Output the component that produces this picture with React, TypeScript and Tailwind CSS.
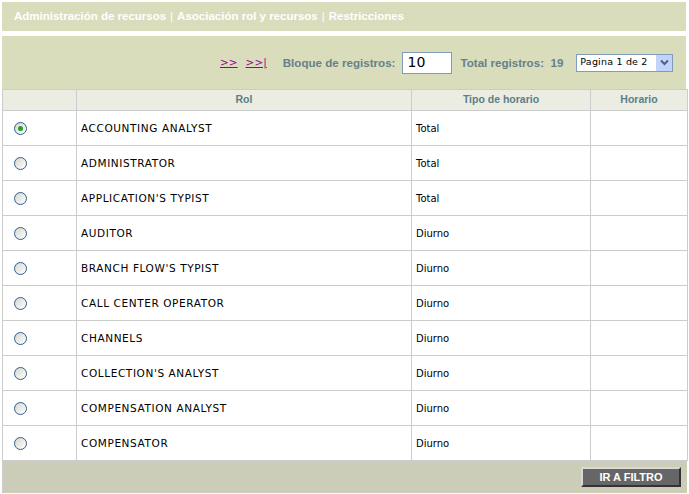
type Row = {
  rol: string;
  tipo: string;
  horario: string;
};

const rows: Row[] = [
  { rol: "ACCOUNTING ANALYST", tipo: "Total", horario: "" },
  { rol: "ADMINISTRATOR", tipo: "Total", horario: "" },
  { rol: "APPLICATION'S TYPIST", tipo: "Total", horario: "" },
  { rol: "AUDITOR", tipo: "Diurno", horario: "" },
  { rol: "BRANCH FLOW'S TYPIST", tipo: "Diurno", horario: "" },
  { rol: "CALL CENTER OPERATOR", tipo: "Diurno", horario: "" },
  { rol: "CHANNELS", tipo: "Diurno", horario: "" },
  { rol: "COLLECTION'S ANALYST", tipo: "Diurno", horario: "" },
  { rol: "COMPENSATION ANALYST", tipo: "Diurno", horario: "" },
  { rol: "COMPENSATOR", tipo: "Diurno", horario: "" },
];

function Radio({ checked }: { checked?: boolean }) {
  return (
    <span className="inline-flex h-[13px] w-[13px] items-center justify-center rounded-full border border-[#2f5f92] bg-gradient-to-br from-[#d6d6d0] to-white">
      {checked && <span className="h-[5px] w-[5px] rounded-full bg-[#21a121]" />}
    </span>
  );
}

export default function App() {
  return (
    <div className="relative h-[494px] w-[689px] overflow-hidden bg-white font-['DejaVu_Sans',Verdana,sans-serif]">
      <div className="pl-[2px] pr-[3px] pt-[2px]">
        {/* top menu */}
        <div className="flex h-[29px] items-center whitespace-nowrap bg-[#d9ddbc] pl-[12px] font-['Liberation_Sans',Arial,sans-serif] text-[11.5px] font-bold text-white">
          <span>Administración de recursos</span>
          <span className="mx-[4px] font-normal">|</span>
          <span>Asociación rol y recursos</span>
          <span className="mx-[4px] font-normal">|</span>
          <span>Restricciones</span>
        </div>

        {/* pager */}
        <div className="mt-[5px] flex h-[53px] items-center whitespace-nowrap bg-[#d9ddbc] pl-[218px] font-['Liberation_Sans',Arial,sans-serif] text-[11.6px]">
          <a className="shrink-0 font-['DejaVu_Sans',sans-serif] text-[10.5px] text-[#990099] underline">&gt;&gt;</a>
          <a className="ml-[8px] shrink-0 font-['DejaVu_Sans',sans-serif] text-[10.5px] text-[#990099] underline">&gt;&gt;|</a>
          <span className="ml-[16px] shrink-0 font-bold text-[#66808a]">Bloque de registros:</span>
          <span className="ml-[7px] flex h-[22px] w-[50px] shrink-0 items-center border border-[#7f9db9] bg-white pl-[4px] font-['DejaVu_Sans',sans-serif] text-[14px] text-black">
            10
          </span>
          <span className="ml-[8px] shrink-0 font-bold text-[#66808a]">Total registros:&nbsp; 19</span>
          <span className="ml-[13px] flex h-[18px] w-[97px] shrink-0 items-center justify-between border border-[#7f9db9] bg-white pl-[3px] font-['DejaVu_Sans',sans-serif] text-[9.5px] tracking-[0.2px] text-black">
            Pagina 1 de 2
            <span className="flex h-[16px] w-[16px] items-center justify-center bg-[#c1d3fb]">
              <svg width="9" height="7" viewBox="0 0 9 7">
                <path d="M1 1.5 L4.5 5 L8 1.5" stroke="#4d6185" strokeWidth="2" fill="none" />
              </svg>
            </span>
          </span>
        </div>

        {/* table */}
        <table className="w-[685px] table-fixed border-collapse text-[10.5px]">
          <colgroup>
            <col className="w-[74px]" />
            <col className="w-[335px]" />
            <col className="w-[179px]" />
            <col className="w-[97px]" />
          </colgroup>
          <thead>
            <tr className="h-[21px] bg-[#ebede3] font-['Liberation_Sans',Arial,sans-serif] text-[10.5px] font-bold text-[#5c7e84]">
              <th className="border border-[#cccccc]" />
              <th className="border border-[#cccccc] text-center">Rol</th>
              <th className="border border-[#cccccc] text-center">Tipo de horario</th>
              <th className="border border-[#cccccc] text-center">Horario</th>
            </tr>
          </thead>
          <tbody>
            {rows.map((r, i) => (
              <tr key={r.rol} className="h-[35px] bg-white text-black">
                <td className="border border-[#cccccc] pl-[11px] pt-[1px]">
                  <span className="flex items-center">
                    <Radio checked={i === 0} />
                  </span>
                </td>
                <td className="border border-[#cccccc] pl-[4px] pt-[2px] tracking-[0.6px]">{r.rol}</td>
                <td className="border border-[#cccccc] pl-[4px] pt-[1px] text-[10px]">{r.tipo}</td>
                <td className="border border-[#cccccc]">{r.horario}</td>
              </tr>
            ))}
          </tbody>
        </table>

        {/* footer */}
        <div className="flex h-[32px] w-[685px] items-center justify-end border-l border-[#cccccc] bg-[#cbcdb9] pr-[6px]">
          <button className="flex h-[20px] w-[100px] items-center justify-center border-2 border-t-[#d8d8d8] border-l-[#d8d8d8] border-r-[#333333] border-b-[#333333] bg-[#666666] font-['Liberation_Sans',Arial,sans-serif] text-[11px] font-bold text-white">
            IR A FILTRO
          </button>
        </div>
      </div>
    </div>
  );
}
